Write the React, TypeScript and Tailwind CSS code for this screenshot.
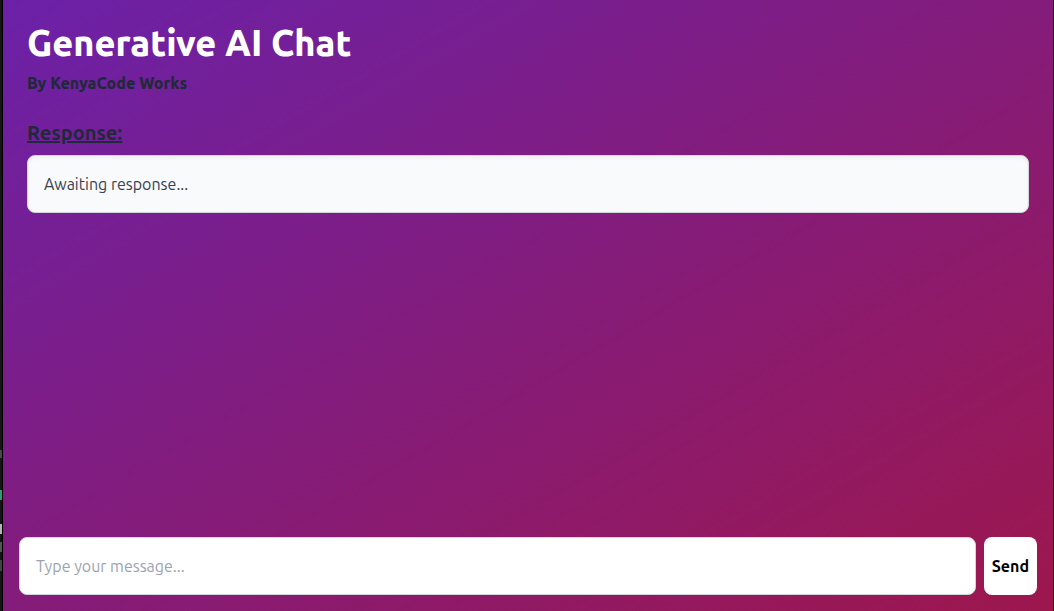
import { useState } from "react";
import type { FormEvent } from "react";

export default function App() {
  const [message, setMessage] = useState("");
  const [response, setResponse] = useState("Awaiting response...");

  const handleSubmit = (event: FormEvent<HTMLFormElement>) => {
    event.preventDefault();
    if (!message.trim()) return;
    setResponse(message);
    setMessage("");
  };

  return (
    <div className="flex min-h-screen bg-[#151515] font-['Ubuntu','Noto_Sans',sans-serif]">
      <div aria-hidden="true" className="flex w-[3px] shrink-0 flex-col justify-end border-r border-black pb-10">
        <span className="mb-8 h-2 bg-[#4a4a4a]" />
        <span className="mb-6 h-[10px] bg-[#26a073]" />
        <span className="mb-2 h-[10px] bg-[#b5b5b5]" />
        <span className="mb-2 h-[10px] bg-[#555555]" />
        <span className="h-[11px] bg-[#444444]" />
      </div>
      <div className="flex grow flex-col border-r border-[#1c0c1c] bg-linear-to-br/srgb from-[#6b21a8] to-[#9d174d]">
        <main className="grow px-6 pt-[23px]">
          <h1 className="mb-2 text-4xl font-extrabold text-white">Generative AI Chat</h1>
          <p className="font-extrabold text-[#1f2937]">By KenyaCode Works</p>
          <section aria-labelledby="response-title" className="mt-6">
            <h2 id="response-title" className="mb-2 text-xl font-semibold text-[#1f2937] underline">
              Response:
            </h2>
            <div className="rounded-lg border border-[#d1d5db] bg-[#f9fafb] p-4 text-[#374151] inset-shadow-sm">
              <p>{response}</p>
            </div>
          </section>
        </main>
        <form onSubmit={handleSubmit} className="flex gap-2 p-4">
          <input
            type="text"
            aria-label="Message"
            placeholder="Type your message..."
            value={message}
            onChange={(event) => setMessage(event.target.value)}
            className="min-w-0 grow rounded-lg border border-[#d1d5db] bg-white p-4 placeholder:text-[#9ca3af]"
          />
          <button type="submit" className="rounded-lg bg-white px-2 font-semibold text-black">
            Send
          </button>
        </form>
      </div>
    </div>
  );
}
